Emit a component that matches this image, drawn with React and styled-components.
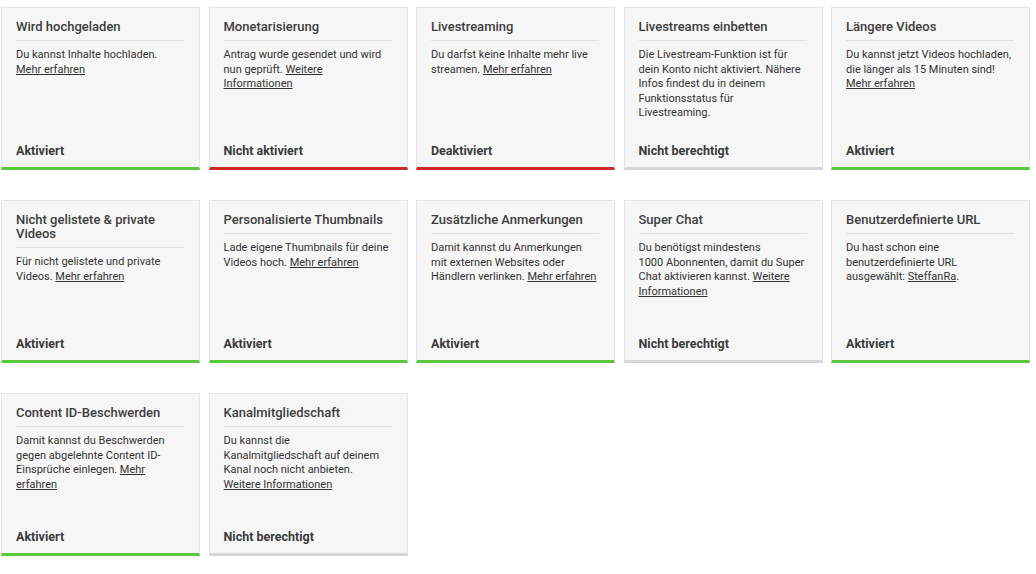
import styled, { createGlobalStyle } from 'styled-components'

const GlobalStyle = createGlobalStyle`
  body {
    margin: 0;
    background: #fff;
    font-family: Roboto, "Liberation Sans", Arial, sans-serif;
    color: #333;
  }
`

const Grid = styled.div`
  display: grid;
  grid-template-columns: repeat(5, 199px);
  column-gap: 8.5px;
  row-gap: 30px;
  padding: 7px 0 0 1px;
`

const barColors = {
  on: '#5ac83a',
  off: '#cc2b23',
  none: '#d6d6d6'
}

const Card = styled.div`
  box-sizing: border-box;
  height: 163px;
  display: flex;
  flex-flow: column nowrap;
  background: #f6f6f6;
  border: 1px solid #e4e4e4;
  border-bottom: 3px solid ${({ state }) => barColors[state]};
  padding: 12px 15px 0 14px;
`

const Title = styled.div`
  font-size: 13px;
  font-weight: 500;
  line-height: 14px;
  color: #3d3d3d;
  padding-bottom: 6px;
  border-bottom: 1px solid #e2e2e2;
`

const Body = styled.div`
  margin-top: 7px;
  font-size: 11px;
  line-height: 14.5px;
  color: #333;
  white-space: pre-line;
`

const More = styled.a`
  color: #333;
  text-decoration: underline;
  cursor: pointer;
`

const Status = styled.div`
  margin-top: auto;
  padding-bottom: 9px;
  font-size: 12.5px;
  font-weight: 700;
  line-height: 14px;
  color: #3a3a3a;
`

const features = [
  {
    title: 'Wird hochgeladen',
    text: 'Du kannst Inhalte hochladen. ',
    link: 'Mehr erfahren',
    status: 'Aktiviert',
    state: 'on'
  },
  {
    title: 'Monetarisierung',
    text: 'Antrag wurde gesendet und wird nun geprüft. ',
    link: 'Weitere Informationen',
    status: 'Nicht aktiviert',
    state: 'off'
  },
  {
    title: 'Livestreaming',
    text: 'Du darfst keine Inhalte mehr live streamen. ',
    link: 'Mehr erfahren',
    status: 'Deaktiviert',
    state: 'off'
  },
  {
    title: 'Livestreams einbetten',
    text: 'Die Livestream-Funktion ist für dein Konto nicht aktiviert. Nähere Infos findest du in deinem Funktionsstatus für Livestreaming.',
    status: 'Nicht berechtigt',
    state: 'none'
  },
  {
    title: 'Längere Videos',
    text: 'Du kannst jetzt Videos hochladen, die länger als 15 Minuten sind! ',
    link: 'Mehr erfahren',
    status: 'Aktiviert',
    state: 'on'
  },
  {
    title: 'Nicht gelistete & private Videos',
    text: 'Für nicht gelistete und private Videos. ',
    link: 'Mehr erfahren',
    status: 'Aktiviert',
    state: 'on'
  },
  {
    title: 'Personalisierte Thumbnails',
    text: 'Lade eigene Thumbnails für deine Videos hoch. ',
    link: 'Mehr erfahren',
    status: 'Aktiviert',
    state: 'on'
  },
  {
    title: 'Zusätzliche Anmerkungen',
    text: 'Damit kannst du Anmerkungen mit externen Websites oder Händlern verlinken. ',
    link: 'Mehr erfahren',
    status: 'Aktiviert',
    state: 'on'
  },
  {
    title: 'Super Chat',
    text: 'Du benötigst mindestens 1000\u00a0Abonnenten, damit du Super Chat aktivieren kannst. ',
    link: 'Weitere Informationen',
    status: 'Nicht berechtigt',
    state: 'none'
  },
  {
    title: 'Benutzerdefinierte URL',
    text: 'Du hast schon eine benutzerdefinierte URL ausgewählt: ',
    link: 'SteffanRa',
    after: '.',
    status: 'Aktiviert',
    state: 'on'
  },
  {
    title: 'Content ID-Beschwerden',
    text: 'Damit kannst du Beschwerden gegen abgelehnte Content ID-Einsprüche einlegen. ',
    link: 'Mehr erfahren',
    status: 'Aktiviert',
    state: 'on'
  },
  {
    title: 'Kanalmitgliedschaft',
    text: 'Du kannst die\nKanalmitgliedschaft auf deinem Kanal noch nicht anbieten.\n',
    link: 'Weitere Informationen',
    status: 'Nicht berechtigt',
    state: 'none'
  }
]

export default function App() {
  return (
    <>
      <GlobalStyle />
      <Grid>
        {features.map(f => (
          <Card key={f.title} state={f.state}>
            <Title>{f.title}</Title>
            <Body>
              {f.text}
              {f.link && <More>{f.link}</More>}
              {f.after}
            </Body>
            <Status>{f.status}</Status>
          </Card>
        ))}
      </Grid>
    </>
  )
}
